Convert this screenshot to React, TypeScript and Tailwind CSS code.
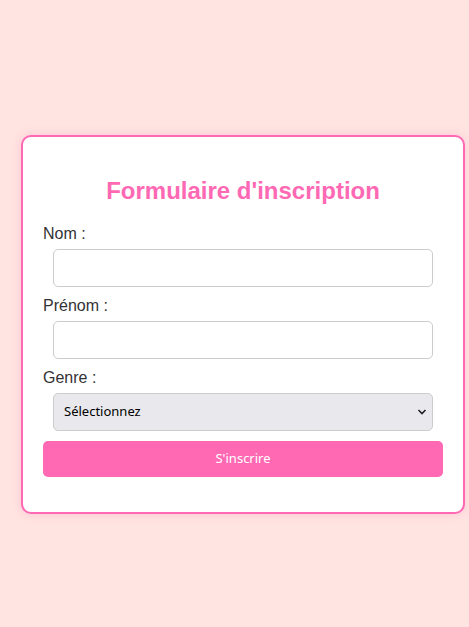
import React from "react";

export default function App() {
  return (
    <div className="min-h-[627px] w-full bg-[#ffe4e1] pt-[135px] pl-[21px]" style={{ fontFamily: '"Liberation Sans", Arial, sans-serif' }}>
      <div className="w-[444px] rounded-[10px] border-2 border-[#ff69b4] bg-white px-[20px] pt-[20px] pb-[35px] shadow-[0_0_10px_rgba(255,105,180,0.25)]">
        <h2 className="mt-[20px] mb-[20px] h-[28px] text-center text-[24px] font-bold leading-[28px] text-[#ff69b4]">
          Formulaire d'inscription
        </h2>
        <label className="block h-[18px] text-[16px] leading-[18px] text-[#333] mb-[6px]">Nom :</label>
        <input type="text" className="mb-[10px] ml-[10px] block h-[38px] w-[380px] rounded-[5px] border border-[#ccc] bg-white outline-none" />
        <label className="block h-[18px] text-[16px] leading-[18px] text-[#333] mb-[6px]">Prénom :</label>
        <input type="text" className="mb-[10px] ml-[10px] block h-[38px] w-[380px] rounded-[5px] border border-[#ccc] bg-white outline-none" />
        <label className="block h-[18px] text-[16px] leading-[18px] text-[#333] mb-[6px]">Genre :</label>
        <div className="relative mb-[10px] ml-[10px] h-[38px] w-[380px]">
          <select
            className="block h-[38px] w-[380px] appearance-none rounded-[5px] border border-[#ccc] bg-[#e9e9ed] pl-[10px] text-[13px] text-black outline-none"
            style={{ fontFamily: '"Noto Sans", "DejaVu Sans", sans-serif' }}
            defaultValue=""
          >
            <option value="">Sélectionnez</option>
            <option value="h">Homme</option>
            <option value="f">Femme</option>
          </select>
          <svg className="pointer-events-none absolute right-[6px] top-[15px]" width="10" height="8" viewBox="0 0 10 8">
            <path d="M1.5 2 L5 5.5 L8.5 2" fill="none" stroke="#222" strokeWidth="1.6" />
          </svg>
        </div>
        <button
          className="block h-[36px] w-[400px] rounded-[5px] bg-[#ff69b4] text-[13px] text-white"
          style={{ fontFamily: '"Noto Sans", "DejaVu Sans", sans-serif' }}
        >
          S'inscrire
        </button>
      </div>
    </div>
  );
}
